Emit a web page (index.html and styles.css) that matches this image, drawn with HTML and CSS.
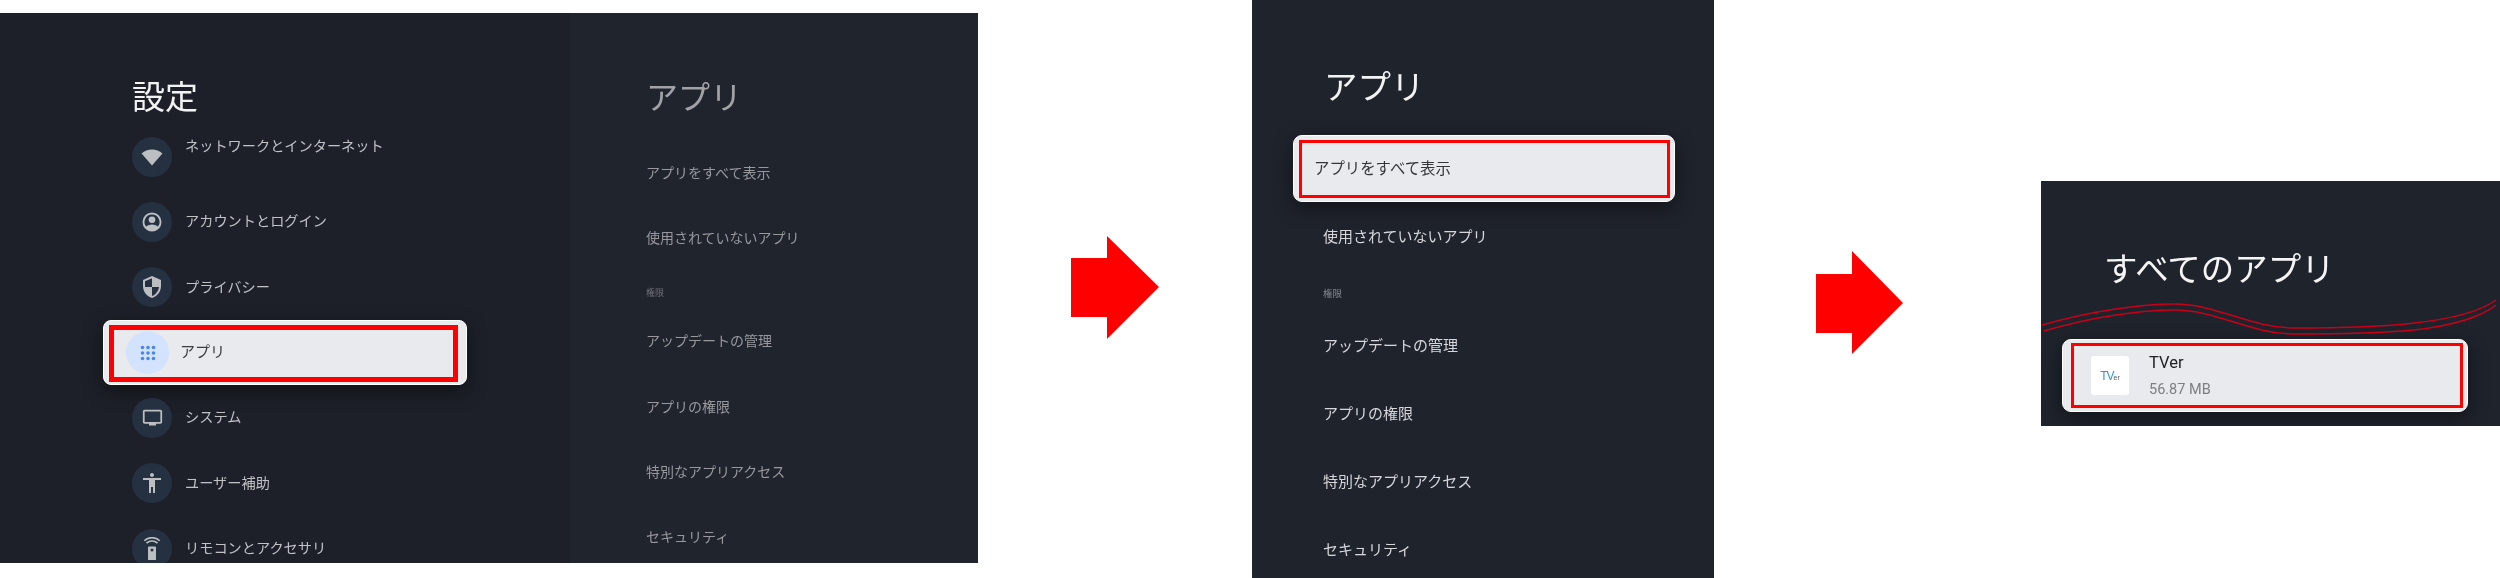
FILE: index.html
```html
<!DOCTYPE html>
<html lang="ja">
<head>
  <meta charset="UTF-8">
  <title>TVer 設定手順</title>
  <link rel="stylesheet" href="styles.css">
</head>
<body>
  <!-- Step 1 -->
  <section class="screen screen-settings">
    <div class="menu-col">
      <h1 class="menu-title">設定</h1>
      <div class="menu-row">
        <span class="menu-icon"><svg viewBox="0 0 24 24" width="24" height="24"><path d="M12 20.5 1.6 8.6C4.4 6.2 8 4.6 12 4.6s7.6 1.6 10.4 4z"/></svg></span>
        <span class="menu-label label-raised">ネットワークとインターネット</span>
      </div>
      <div class="menu-row">
        <span class="menu-icon"><svg viewBox="0 0 24 24" width="24" height="24"><path fill-rule="evenodd" d="M12 2.5a9.5 9.5 0 1 0 0 19 9.5 9.5 0 0 0 0-19zm0 2a7.5 7.5 0 0 1 5.9 12.1C16.400 15.200 14.200 14.500 12 14.500s-4.400.7-5.900 2.100A7.500 7.500 0 0 1 12 4.500z"/><circle cx="12" cy="9.700" r="3.300"/></svg></span>
        <span class="menu-label">アカウントとログイン</span>
      </div>
      <div class="menu-row">
        <span class="menu-icon"><svg viewBox="0 0 24 24" width="24" height="24"><path d="M12 1 3 5v6c0 5.550 3.840 10.740 9 12 5.160-1.260 9-6.450 9-12V5l-9-4zm0 10.990h7c-.53 4.120-3.280 7.790-7 8.940V12H5V6.300l7-3.110v8.800z"/></svg></span>
        <span class="menu-label">プライバシー</span>
      </div>
      <div class="menu-row menu-row-focus">
        <span class="menu-icon menu-icon-focus"><svg viewBox="0 0 16 16" width="16" height="16"><circle cx="2.500" cy="2.500" r="1.800"/><circle cx="8" cy="2.500" r="1.800"/><circle cx="13.500" cy="2.500" r="1.800"/><circle cx="2.500" cy="8" r="1.800"/><circle cx="8" cy="8" r="1.800"/><circle cx="13.500" cy="8" r="1.800"/><circle cx="2.500" cy="13.500" r="1.800"/><circle cx="8" cy="13.500" r="1.800"/><circle cx="13.500" cy="13.500" r="1.800"/></svg></span>
        <span class="menu-label">アプリ</span>
        <span class="red-box red-box-thick"></span>
      </div>
      <div class="menu-row">
        <span class="menu-icon"><svg viewBox="0 0 24 24" width="21" height="21"><path d="M21 3H3c-1.100 0-2 .9-2 2v12c0 1.100.9 2 2 2h5v2h8v-2h5c1.100 0 1.990-.9 1.990-2L23 5c0-1.100-.9-2-2-2zm0 14H3V5h18v12z"/></svg></span>
        <span class="menu-label">システム</span>
      </div>
      <div class="menu-row">
        <span class="menu-icon"><svg viewBox="0 0 24 24" width="24" height="24"><path d="M12 2c1.100 0 2 .9 2 2s-.9 2-2 2-2-.9-2-2 .9-2 2-2zm9 7h-6v13h-2v-6h-2v6H9V9H3V7h18v2z"/></svg></span>
        <span class="menu-label">ユーザー補助</span>
      </div>
      <div class="menu-row">
        <span class="menu-icon"><svg viewBox="0 0 24 24" width="24" height="24"><path fill-rule="evenodd" d="M9 9.500h6a1 1 0 0 1 1 1V23H8V10.500a1 1 0 0 1 1-1zm3 2a1.500 1.500 0 1 0 0 3 1.500 1.500 0 0 0 0-3z"/><path d="M6.500 6.200a8 8 0 0 1 11 0M4.300 3.800a11 11 0 0 1 15.400 0" fill="none" stroke="#bcbfc2" stroke-width="1.600"/></svg></span>
        <span class="menu-label">リモコンとアクセサリ</span>
      </div>
    </div>
    <div class="sub-col">
      <h2 class="sub-title">アプリ</h2>
      <div class="sub-row">アプリをすべて表示</div>
      <div class="sub-row">使用されていないアプリ</div>
      <div class="sub-head">権限</div>
      <div class="sub-row">アップデートの管理</div>
      <div class="sub-row">アプリの権限</div>
      <div class="sub-row">特別なアプリアクセス</div>
      <div class="sub-row">セキュリティ</div>
    </div>
  </section>

  <svg class="arrow arrow-first" viewBox="0 0 88 103" width="88" height="103"><polygon points="0,22 36,22 36,0 88,51 36,103 36,81 0,81"/></svg>

  <!-- Step 2 -->
  <section class="screen screen-apps">
    <h2 class="apps-title">アプリ</h2>
    <div class="apps-focus">
      <span class="apps-text">アプリをすべて表示</span>
      <span class="red-box red-box-thin"></span>
    </div>
    <div class="apps-row">使用されていないアプリ</div>
    <div class="apps-head">権限</div>
    <div class="apps-row">アップデートの管理</div>
    <div class="apps-row">アプリの権限</div>
    <div class="apps-row">特別なアプリアクセス</div>
    <div class="apps-row">セキュリティ</div>
  </section>

  <svg class="arrow arrow-second" viewBox="0 0 87 103" width="87" height="103"><polygon points="0,23 36,23 36,0 87,52 36,103 36,82 0,82"/></svg>

  <!-- Step 3 -->
  <section class="screen screen-all">
    <h2 class="all-title">すべてのアプリ</h2>
    <div class="app-card">
      <div class="app-logo"><span class="logo-tv">TV</span><span class="logo-er">er</span></div>
      <div class="app-info">
        <div class="app-name">TVer</div>
        <div class="app-size">56.87 MB</div>
      </div>
      <span class="red-box red-box-mid"></span>
    </div>
    <!-- hand drawn marks over the screenshot -->
    <svg class="waves" viewBox="0 0 459 245" width="459" height="245">
      <path d="M1 144C50 130 100 123 134 123C175 123 210 147 253 147C300 147 340 146 373 142C410 138 440 130 455 119"/>
      <path d="M3 150C50 136 100 129 134 129C175 129 210 153 253 153C300 153 340 152 373 149C410 145 440 136 455 124"/>
    </svg>
  </section>
</body>
</html>
```

FILE: styles.css
```css
body {
  margin: 0;
  width: 2500px;
  height: 578px;
  display: flex;
  align-items: flex-start;
  background-color: #fff;
  overflow: hidden;
  font-family: "Noto Sans CJK JP", "Noto Sans", sans-serif;
}

h1, h2 {
  margin: 0;
  font-weight: 400;
}

/* the source is an enlarged screenshot, its text is a little soft */
.menu-title, .menu-label, .sub-title, .sub-row, .sub-head,
.apps-title, .apps-row, .apps-head, .apps-text, .all-title, .app-name, .app-size, .app-logo {
  filter: blur(0.4px);
}

.screen {
  flex: none;
  overflow: hidden;
  position: relative;
  background-color: #1f232c;
}

.arrow {
  flex: none;
  fill: #ff0000;
}

.arrow-first {
  margin: 236px 93px 0 93px;
}

.arrow-second {
  margin: 251px 138px 0 102px;
}

/* red marks */
.red-box {
  position: absolute;
  box-sizing: border-box;
  border-style: solid;
  border-color: #ff0000;
}

.red-box-thick {
  top: 4px;
  left: 5px;
  right: 8px;
  bottom: 2px;
  border-width: 5px;
}

.red-box-thin {
  top: 4px;
  left: 5px;
  right: 4px;
  bottom: 3px;
  border-width: 3px;
}

.red-box-mid {
  top: 3px;
  left: 8px;
  right: 4px;
  bottom: 3px;
  border-width: 3px;
}

/* step 1 */
.screen-settings {
  width: 978px;
  height: 550px;
  margin-top: 13px;
  display: flex;
}

.menu-col {
  width: 570px;
  flex: none;
  box-sizing: border-box;
  padding-left: 132px;
  background-color: #1d2028;
}

.menu-title {
  height: 111px;
  padding-top: 59px;
  box-sizing: border-box;
  font-size: 33px;
  line-height: 46px;
  color: #f1f2f3;
}

.menu-row {
  height: 65.33px;
  display: flex;
  align-items: center;
  gap: 13px;
  position: relative;
}

.menu-row-focus {
  box-sizing: border-box;
  width: 364px;
  margin-left: -29px;
  padding-left: 22px;
  gap: 11px;
  border: 1px solid #fff;
  border-radius: 8px;
  background-color: #e8eaed;
  box-shadow: 0 6px 20px rgba(0, 0, 0, 0.45);
  color: #33363b;
}

.menu-icon {
  width: 40px;
  height: 40px;
  flex: none;
  display: flex;
  align-items: center;
  justify-content: center;
  border-radius: 50%;
  background-color: #253041;
  fill: #bcbfc2;
}

.menu-icon-focus {
  width: 43px;
  height: 43px;
  background-color: #d3e3fd;
  fill: #4a86f0;
}

.menu-label {
  font-size: 14.2px;
  line-height: 20px;
  margin-bottom: 3px;
  color: #c0c2c6;
}

.menu-row-focus .menu-label {
  font-size: 15px;
  color: #3a3d42;
}

.menu-row .label-raised {
  margin-bottom: 24px;
}

.sub-col {
  flex: 1;
  padding-left: 76px;
  background-color: #20242d;
}

.sub-title {
  height: 127px;
  padding-top: 59px;
  box-sizing: border-box;
  font-size: 32px;
  line-height: 46px;
  color: #a0a2a6;
}

.sub-row {
  height: 65.33px;
  line-height: 65.33px;
  font-size: 14px;
  color: #97999d;
}

.sub-head {
  height: 37.6px;
  padding-top: 10px;
  box-sizing: border-box;
  font-size: 9px;
  line-height: 23px;
  color: #6d7076;
}

/* step 2 */
.screen-apps {
  width: 462px;
  height: 578px;
}

.apps-title {
  height: 135px;
  padding: 62px 0 0 72px;
  box-sizing: border-box;
  font-size: 33.500px;
  line-height: 46px;
  color: #f1f2f3;
}

.apps-focus {
  position: relative;
  box-sizing: border-box;
  width: 382px;
  height: 67px;
  margin-left: 41px;
  padding-left: 20px;
  border: 1px solid #fff;
  border-radius: 9px;
  background-color: #e8eaed;
  box-shadow: 0 6px 20px rgba(0, 0, 0, 0.45);
  font-size: 15.4px;
  line-height: 63px;
  color: #33363b;
}

.apps-text {
  display: inline-block;
}

.apps-row {
  height: 68px;
  padding-left: 71px;
  font-size: 15px;
  line-height: 68px;
  color: #d6d7da;
}

.apps-head {
  height: 41px;
  padding: 11px 0 0 71px;
  box-sizing: border-box;
  font-size: 9.500px;
  line-height: 24px;
  color: #85888d;
}

/* step 3 */
.screen-all {
  width: 459px;
  height: 245px;
  margin-top: 181px;
}

.all-title {
  height: 158px;
  padding: 62px 0 0 63px;
  box-sizing: border-box;
  font-size: 33.500px;
  line-height: 48px;
  color: #f5f5f6;
}

.app-card {
  position: relative;
  box-sizing: border-box;
  display: flex;
  align-items: center;
  gap: 20px;
  width: 406px;
  height: 73px;
  margin-left: 21px;
  padding-left: 28px;
  border: 1px solid #fff;
  border-radius: 9px;
  background-color: #e8eaed;
  box-shadow: 0 6px 20px rgba(0, 0, 0, 0.45);
}

.app-logo {
  width: 38px;
  height: 39px;
  display: flex;
  align-items: center;
  justify-content: center;
  border-radius: 3px;
  background-color: #fff;
  font-family: "Liberation Sans", sans-serif;
}

.logo-tv {
  font-size: 12px;
  letter-spacing: -1px;
  color: #2f97d4;
}

.logo-er {
  font-size: 7px;
  margin-top: 3px;
  color: #55585e;
}

.app-name {
  font-family: Roboto, sans-serif;
  font-size: 16.5px;
  line-height: 20px;
  color: #202124;
}

.app-size {
  margin-top: 9px;
  font-family: Roboto, sans-serif;
  font-size: 14.5px;
  line-height: 16px;
  color: #7b7e83;
}

.waves {
  position: absolute;
  top: 0;
  left: 0;
  fill: none;
  stroke: #c8001a;
  stroke-width: 1.500;
}
```
